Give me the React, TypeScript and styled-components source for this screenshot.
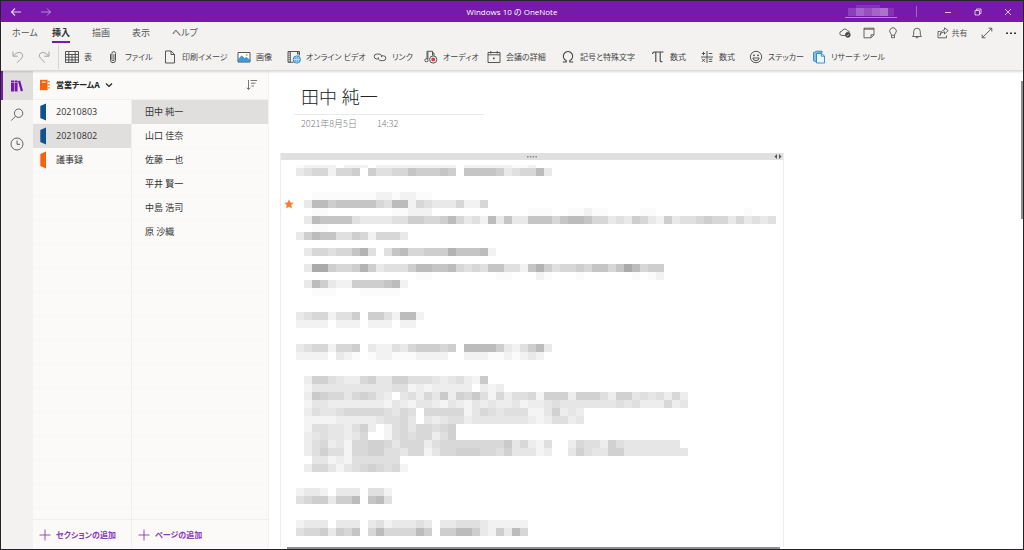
import React from "react";
import styled, { createGlobalStyle } from "styled-components";

const GlobalStyle = createGlobalStyle`
  * { box-sizing: border-box; }
  body { margin: 0; background: #fff; }
  button { font: inherit; color: inherit; background: none; border: 0; padding: 0; margin: 0; cursor: pointer; }
  svg { display: block; flex: none; }
`;

const PURPLE = "#7719aa";

const Window = styled.div`
  display: flex;
  flex-direction: column;
  height: 100vh;
  border: 1px solid #26222a;
  background: #fff;
  color: #333;
  font-family: "Open Sans", "Noto Sans CJK JP", sans-serif;
  font-size: 9px;
  line-height: 12px;
  font-feature-settings: "palt";
  overflow: hidden;
`;

const TitleBar = styled.header`
  display: grid;
  grid-template-columns: 1fr auto 1fr;
  align-items: center;
  height: 21px;
  flex: none;
  background: ${PURPLE};
  color: #e6d3f0;
`;

const BarGroup = styled.div<{ $end?: boolean }>`
  display: flex;
  align-items: center;
  height: 21px;
  justify-content: ${(p) => (p.$end ? "flex-end" : "flex-start")};
`;

const BarButton = styled.button`
  display: grid;
  place-items: center;
  width: 30px;
  height: 21px;
`;

const WindowTitle = styled.div`
  font-size: 8px;
  color: #fff;
  white-space: nowrap;
`;

const Account = styled.button`
  border-bottom: 1px solid #b987d2;
  padding: 0 3px;
  margin-right: 19px;
`;

const Divider = styled.span`
  width: 1px;
  height: 11px;
  background: #a566c8;
  margin-right: 16px;
`;

const Ribbon = styled.div`
  position: relative;
  z-index: 1;
  flex: none;
  background: #f3f2f1;
  border-bottom: 1px solid #dcdbda;
  box-shadow: 0 1px 2px rgba(0, 0, 0, 0.14);
`;

const TabRow = styled.div`
  display: flex;
  justify-content: space-between;
  height: 22px;
`;

const Tabs = styled.nav`
  display: grid;
  grid-auto-flow: column;
  grid-auto-columns: 40px;
  justify-items: start;
  padding-left: 11px;
`;

const Tab = styled.button<{ $active?: boolean }>`
  height: 21px;
  white-space: nowrap;
  color: ${(p) => (p.$active ? "#333" : "#555")};
  font-weight: ${(p) => (p.$active ? 700 : 400)};
  border-top: 2px solid transparent;
  border-bottom: 2px solid ${(p) => (p.$active ? PURPLE : "transparent")};
`;

const Actions = styled.div`
  display: flex;
  align-items: center;
  color: #555;
`;

const ActionButton = styled.button<{ $wide?: boolean }>`
  display: flex;
  align-items: center;
  justify-content: center;
  gap: 3px;
  width: ${(p) => (p.$wide ? 46 : 24)}px;
  height: 22px;
  font-size: 8px;
  white-space: nowrap;
`;

const Toolbar = styled.div`
  display: flex;
  align-items: center;
  height: 26px;
  padding-left: 10px;
  font-size: 8px;
  color: #444;
`;

const Tool = styled.button<{ $width?: number }>`
  display: flex;
  align-items: center;
  gap: 5px;
  width: ${(p) => (p.$width ? `${p.$width}px` : "auto")};
  height: 24px;
  flex: none;
  white-space: nowrap;
`;

const History = styled.div`
  display: flex;
  gap: 12px;
  padding-right: 7px;
  margin-right: 6px;
  border-right: 1px solid #d6d4d2;
  color: #999;
`;

const Body = styled.div`
  display: flex;
  flex: 1;
  min-height: 0;
`;

const Rail = styled.nav`
  width: 32px;
  flex: none;
  background: #f3f2f1;
  color: #555;
`;

const RailButton = styled.button<{ $active?: boolean }>`
  display: grid;
  place-items: center;
  width: 32px;
  height: 29px;
  padding-right: 2px;
  border-left: 2px solid ${(p) => (p.$active ? PURPLE : "transparent")};
  background: ${(p) => (p.$active ? "#e1dfdd" : "transparent")};
`;

const Navigation = styled.aside`
  display: flex;
  flex-direction: column;
  width: 236px;
  flex: none;
  background: #fbfaf9;
  border-right: 1px solid #f3f1f0;
`;

const NotebookBar = styled.div`
  display: flex;
  align-items: center;
  justify-content: space-between;
  height: 29px;
  flex: none;
  padding: 0 10px 0 6px;
  border-bottom: 1px solid #f0efed;
`;

const NotebookButton = styled.button`
  display: flex;
  align-items: center;
  gap: 5px;
  font-size: 8px;
  font-weight: 700;
  color: #222;
`;

const Lists = styled.div`
  display: flex;
  flex: 1;
  min-height: 0;
`;

const Column = styled.div<{ $pages?: boolean }>`
  display: flex;
  flex-direction: column;
  flex: ${(p) => (p.$pages ? "1" : "none")};
  width: ${(p) => (p.$pages ? "auto" : "99px")};
  border-right: ${(p) => (p.$pages ? "0" : "1px solid #f0efed")};
`;

const Items = styled.ul`
  flex: 1;
  margin: 0;
  padding: 0;
  list-style: none;
  background: repeating-linear-gradient(#fbfaf9 0 23px, #f8f7f6 23px 24px);
`;

const Item = styled.button<{ $active?: boolean; $pages?: boolean }>`
  display: flex;
  align-items: center;
  gap: 9px;
  width: 100%;
  height: 24px;
  padding-left: ${(p) => (p.$pages ? 13 : 7)}px;
  background: ${(p) => (p.$active ? "#e1dfdd" : "transparent")};
  white-space: nowrap;
`;

const AddButton = styled.button`
  display: flex;
  align-items: center;
  gap: 5px;
  height: 30px;
  flex: none;
  padding-left: 6px;
  border-top: 1px solid #f0efed;
  font-size: 8px;
  font-weight: 700;
  color: #8a3ab5;
  white-space: nowrap;
`;

const Canvas = styled.main`
  position: relative;
  flex: 1;
  min-width: 0;
  overflow: hidden;
  padding-left: 11px;
`;

const PageHead = styled.div`
  margin: 10px 0 0 14px;
  width: 190px;
`;

const PageTitle = styled.h1`
  margin: 0;
  padding-left: 7px;
  height: 34px;
  border-bottom: 1px solid #e8e8e8;
  font-size: 18px;
  line-height: 32px;
  font-weight: 300;
  color: #222;
`;

const PageDate = styled.div`
  display: flex;
  gap: 20px;
  padding: 2px 0 0 7px;
  color: #808080;
  font-family: "Noto Sans CJK JP", sans-serif;
  font-weight: 300;
  line-height: 14px;
`;

const Note = styled.section`
  max-width: 504px;
  height: 394px;
  margin-top: 22px;
  border: 1px solid #ececec;
  border-width: 0 1px;
`;

const NoteHandle = styled.div`
  display: grid;
  grid-template-columns: 1fr auto 1fr;
  align-items: center;
  height: 7px;
  padding-right: 1px;
  background: #e0e0e0;

  svg:last-child { justify-self: end; }
`;

const NoteBody = styled.div`
  display: flex;
  gap: 2px;
  padding-left: 3px;
`;

const StarTag = styled.span`
  width: 10px;
  padding-top: 39px;
`;

const Scroll = styled.span<{ $horizontal?: boolean }>`
  position: absolute;
  background: #8e8e8e;
  ${(p) =>
    p.$horizontal
      ? "left: 18px; bottom: 0; width: 493px; height: 2px;"
      : "right: 0; top: 10px; width: 2px; height: 138px;"}
`;

const Icon = ({ children, size = 14, w }: { children: React.ReactNode; size?: number; w?: number }) => (
  <svg
    width={w ?? size}
    height={size}
    viewBox={`0 0 ${w ?? size} ${size}`}
    fill="none"
    stroke="currentColor"
    strokeWidth="0.9"
    aria-hidden="true"
  >
    {children}
  </svg>
);

/* Obscured note text: one digit per 8px cell, higher is darker. */
const CELL = 8;
const NOTE_ROWS: Record<number, string> = {
  0: "01111.111.1111111111.111111001",
  1: "23441445.53344655565.66665234472",
  4: "..000000001101100",
  5: ".27756666643771432224114",
  6: "..00........00111............000..00100....00...........0",
  7: ".27666632222335544574231726226664677644232542152334544242323",
  8: "..00",
  9: "25766335414442",
  11: ".244344683.36744555866671",
  13: ".299544585233357766743436633168534454664697455",
  14: "...............00........00...10...0......0.01",
  15: ".2752115555671",
  16: "..000...00000",
  19: "23441335.5531771",
  20: "1111.111.111.11",
  23: "23441445.21132455545.77775213572",
  24: "1111.210.0110001111..1110010121",
  27: ".26643225633664443234217",
  28: ".133333333334412122222.212",
  29: ".27655356532.342537265741524451666266642663434252",
  30: ".133222222213213321321323223122343333333434222523",
  31: ".24334555554354.55555135434441136232",
  32: ".11112222234453.32344233333332124423",
  33: ".144332462.145355456",
  34: ".23433235..145455246",
  35: ".2452315566535552455555555735214..25442643333333",
  36: ".2464415566443551355666554633312..364336633333333",
  37: "..33121444444",
  38: ".2553134565451",
  41: "1221.222.331",
  42: "34552557.673",
  45: "1222.222.23122232.22333211111",
  46: "34452546.47444475.55775215274",
};

/* Rows of the middle paragraph are a paler grey. */
const shade = (row: number, level: number) => {
  const g = 251 - level * (row >= 27 && row <= 38 ? 7 : 9);
  return `rgb(${g},${g},${g})`;
};

const NoteMosaic = () => (
  <svg width="488" height="376" viewBox="0 0 488 376" shapeRendering="crispEdges" role="img" aria-label="Note text">
    {Object.entries(NOTE_ROWS).flatMap(([row, cells]) =>
      [...cells].map((c, i) => {
        if (c === ".") return null;
        const first = row === "0";
        return (
          <rect
            key={`${row}-${i}`}
            x={i * CELL}
            y={Number(row) * CELL + (first ? 5 : 0)}
            width={CELL}
            height={first ? 3 : CELL}
            fill={shade(Number(row), Number(c))}
          />
        );
      })
    )}
  </svg>
);

const AccountMosaic = () => (
  <svg width="46" height="12" viewBox="0 0 46 12" shapeRendering="crispEdges" role="img" aria-label="Account">
    {["#8c3ebb", "#a564ca", "#9850c0", "#a564ca", "#ad72d0", "#8431b3"].map((c, i) => (
      <rect key={i} x={i * 8} y="3" width="8" height="8" fill={c} />
    ))}
    <rect x="8" y="0" width="24" height="3" fill="#8431b3" />
  </svg>
);

const TOOLS: { label: string; width: number; icon: React.ReactNode }[] = [
  {
    label: "表",
    width: 41,
    icon: (
      <Icon>
        <path d="M.5 1.5h13v11H.5zM.5 4.5h13M.5 7.2h13M.5 9.9h13M3.8 1.5v11M7 4.5v8M10.2 1.5v11" />
      </Icon>
    ),
  },
  {
    label: "ファイル",
    width: 57,
    icon: (
      <Icon>
        <path d="M4.5 4v6.2a2.5 2.5 0 0 0 5 0V3.4a1.8 1.8 0 0 0-3.6 0v6.3a1 1 0 0 0 2 0V4.2" />
      </Icon>
    ),
  },
  {
    label: "印刷イメージ",
    width: 74,
    icon: (
      <Icon>
        <path d="M2.5 1h5.6l3.4 3.4V13h-9zM8 1v3.5h3.5" />
      </Icon>
    ),
  },
  {
    label: "画像",
    width: 50,
    icon: (
      <Icon>
        <path fill="#fff" d="M1 2.5h12V12H1z" />
        <path fill="#3f9bd8" stroke="#2b7fb8" strokeWidth=".6" d="M1.4 9.3l3.3-3.5 2.8 2.8 1.7-1.3 3.5 2.6v1.8H1.4z" />
        <circle cx="9.8" cy="5" r=".9" fill="#f0a030" stroke="none" />
      </Icon>
    ),
  },
  {
    label: "オンライン ビデオ",
    width: 86,
    icon: (
      <Icon>
        <path d="M6.5 12.3H1V1.5h11.5v3.8M3.3 1.5v10.8M10.5 1.5v3" />
        <path strokeDasharray="1.2 1" d="M2.1 2.5V12M11.6 2.5v3" />
        <circle cx="9.8" cy="9.5" r="3.6" fill="#4aa3df" stroke="#1f78b8" />
        <path stroke="#d8eefb" strokeWidth=".7" d="M6.4 9.5h6.8M9.8 6v7M8.2 6.7q-1.2 2.8 0 5.6M11.4 6.7q1.2 2.8 0 5.6" />
      </Icon>
    ),
  },
  {
    label: "リンク",
    width: 51,
    icon: (
      <Icon>
        <path d="M5.2 8.9H3.6a2.4 2.4 0 0 1 0-4.8h2.6a2.4 2.4 0 0 1 2.3 3.1" />
        <path d="M8.4 5.8h2a2.4 2.4 0 0 1 0 4.8H7.7a2.4 2.4 0 0 1-2.2-3.2" />
      </Icon>
    ),
  },
  {
    label: "オーディオ",
    width: 63,
    icon: (
      <Icon>
        <path d="M3 9V1.3h5.5v4.2M8.5 3H10v2.8M3.9 2v7" />
        <ellipse cx="2.5" cy="10.3" rx="1.7" ry="1.5" />
        <circle cx="9.2" cy="9.5" r="3.6" fill="#f3f2f1" />
        <circle cx="9.2" cy="9.5" r="1.9" fill="#e03a48" stroke="none" />
      </Icon>
    ),
  },
  {
    label: "会議の詳細",
    width: 74,
    icon: (
      <Icon>
        <path d="M1 2.5h12v10H1zM1 4.8h12M3.8 1v2.5M10.2 1v2.5" />
        <rect x="6" y="7.6" width="1.6" height="1.6" fill="currentColor" stroke="none" />
      </Icon>
    ),
  },
  {
    label: "記号と特殊文字",
    width: 90,
    icon: (
      <Icon>
        <path strokeWidth="1.1" d="M1.8 12h3.4v-1.5A4.7 4.7 0 1 1 8.8 10.5V12h3.4" />
      </Icon>
    ),
  },
  {
    label: "数式",
    width: 49,
    icon: (
      <Icon>
        <path strokeWidth="1.1" d="M1.5 4Q1.7 2 3.5 2h9M4.8 2v10M9.2 2v8.6Q9.2 12 11.5 11.8" />
      </Icon>
    ),
  },
  {
    label: "数式",
    width: 49,
    icon: (
      <Icon>
        <path d="M7 1v12M1 7h12M3.5 1.8v3.4M1.8 3.5h3.4M8.8 3.5h3.4M2 8.7l3 3.2M5 8.7l-3 3.2M8.8 9.2h3.4M8.8 11.4h3.4" />
      </Icon>
    ),
  },
  {
    label: "ステッカー",
    width: 63,
    icon: (
      <Icon>
        <circle cx="7" cy="7" r="5.7" />
        <path d="M3.8 8h6.4q-.6 2.7-3.2 2.7T3.8 8z" />
        <circle cx="5" cy="5.3" r=".9" fill="currentColor" stroke="none" />
        <circle cx="9" cy="5.3" r=".9" fill="currentColor" stroke="none" />
      </Icon>
    ),
  },
  {
    label: "リサーチ ツール",
    width: 80,
    icon: (
      <Icon>
        <path stroke="#2b88c4" fill="#7fbfe8" d="M1.5 2.5L5 1.2h5v1.6l-5.5.7V12l-3-1.200z" />
        <path stroke="#2b88c4" fill="#eaf5fc" d="M4.5 3.5h5l3 2.5v7h-8zM9.3 3.5v2.7h3.2" />
      </Icon>
    ),
  },
];

const SECTIONS = [
  { name: "20210803", color: "#11518f" },
  { name: "20210802", color: "#11518f", active: true },
  { name: "議事録", color: "#f7630c" },
];

const PAGES = ["田中 純一", "山口 佳奈", "佐藤 一也", "平井 賢一", "中島 浩司", "原 沙織"];

const PlusIcon = () => (
  <Icon size={12}>
    <path d="M6 .5v11M.5 6h11" />
  </Icon>
);

export default function App() {
  return (
    <Window lang="ja">
      <GlobalStyle />
      <TitleBar>
        <BarGroup>
          <BarButton aria-label="戻る">
            <Icon size={12}>
              <path strokeWidth="1.1" d="M11 6H1.5M5 2.5L1.5 6 5 9.5" />
            </Icon>
          </BarButton>
          <BarButton aria-label="進む">
            <Icon size={12}>
              <path opacity=".7" d="M1 6h9.5M7 2.5L10.5 6 7 9.5" />
            </Icon>
          </BarButton>
        </BarGroup>
        <WindowTitle>Windows 10 の OneNote</WindowTitle>
        <BarGroup $end>
          <Account aria-label="アカウント">
            <AccountMosaic />
          </Account>
          <Divider />
          <BarButton aria-label="最小化">
            <Icon size={8}>
              <path d="M1 4.5h6" />
            </Icon>
          </BarButton>
          <BarButton aria-label="元に戻す">
            <Icon size={8}>
              <path d="M1 2.5h4.500V7H1zM2.5 2.5V1H7v4.5H5.5" />
            </Icon>
          </BarButton>
          <BarButton aria-label="閉じる">
            <Icon size={8}>
              <path d="M1 1l6 6M7 1L1 7" />
            </Icon>
          </BarButton>
        </BarGroup>
      </TitleBar>

      <Ribbon>
        <TabRow>
          <Tabs>
            {["ホーム", "挿入", "描画", "表示", "ヘルプ"].map((t) => (
              <Tab key={t} $active={t === "挿入"}>
                {t}
              </Tab>
            ))}
          </Tabs>
          <Actions>
            <ActionButton aria-label="同期">
              <Icon size={12}>
                <path d="M6 8.5H3a2.2 2.2 0 0 1 0-4.4 3 3 0 0 1 5.6-.3 2 2 0 0 1 2 1.7" />
                <circle cx="8.8" cy="7.9" r="2.4" fill="#444" stroke="#444" />
                <path stroke="#fff" strokeWidth=".7" d="M7.600 8l.9.9L10 7.2" />
              </Icon>
            </ActionButton>
            <ActionButton aria-label="付箋">
              <Icon size={12}>
                <path d="M1 1.2h10v6.6l-3 3H1zM11 7.8H8v3M1 2.2h10" />
              </Icon>
            </ActionButton>
            <ActionButton aria-label="ヒント">
              <Icon size={12}>
                <path d="M4.5 8.3Q4.4 7 3.4 6.100a3.300 3.300 0 1 1 5.200 0Q7.600 7 7.500 8.300zM4.500 8.300v2.400h3V8.300" />
              </Icon>
            </ActionButton>
            <ActionButton aria-label="通知">
              <Icon size={12}>
                <path d="M1.5 9.5q1.2-1 1.2-2.5V4.5a3.3 3.3 0 0 1 6.6 0V7q0 1.5 1.2 2.5zM4.8 9.7a1.2 1.2 0 0 0 2.4 0" />
              </Icon>
            </ActionButton>
            <ActionButton $wide>
              <Icon size={12}>
                <path d="M3.5 4.5H1v6.3h8.5V8.5M3 8.5Q3.5 5 7.5 4.8V7l3.700-3.400L7.500.8v2Q3.500 3.500 3 8.500z" />
              </Icon>
              共有
            </ActionButton>
            <ActionButton aria-label="全画面">
              <Icon size={12}>
                <path d="M1.2 10.8l9.600-9.600M7.500 1.200h3.300v3.300M4.500 10.800H1.200V7.500" />
              </Icon>
            </ActionButton>
            <ActionButton aria-label="その他">
              <Icon size={12}>
                <path stroke="none" fill="#333" d="M1 5.5h2V7H1zM5 5.5h2V7H5zM9 5.5h2V7H9z" />
              </Icon>
            </ActionButton>
          </Actions>
        </TabRow>
        <Toolbar>
          <History>
            <Tool aria-label="元に戻す">
              <Icon>
                <path d="M2 1.5v4.7h4.7M2.3 6Q5 2.4 8.3 2.4a3.3 3.3 0 0 1 2.4 5.6L6 12.7" />
              </Icon>
            </Tool>
            <Tool aria-label="やり直し">
              <Icon>
                <path d="M12 1.5v4.7H7.3M11.7 6Q9 2.4 5.7 2.4A3.3 3.3 0 0 0 3.3 8L8 12.7" />
              </Icon>
            </Tool>
          </History>
          {TOOLS.map((t, i) => (
            <Tool key={i} $width={t.width}>
              {t.icon}
              {t.label}
            </Tool>
          ))}
        </Toolbar>
      </Ribbon>

      <Body>
        <Rail>
          <RailButton $active aria-label="ノートブック">
            <Icon size={12}>
              <path
                stroke="none"
                fill={PURPLE}
                d="M0 .5h3v11H0zM3.600.5h3v11h-3zM7 1.200l2.200-.7L12 10.800l-2.200.7z"
              />
              <path stroke="#e1dfdd" strokeWidth=".5" d="M0 2.5h3M3.6 2.5h3" />
            </Icon>
          </RailButton>
          <RailButton aria-label="検索">
            <Icon>
              <circle cx="8.6" cy="5.2" r="4.2" />
              <path d="M5.6 8.2l-4.4 4.4" />
            </Icon>
          </RailButton>
          <RailButton aria-label="最近使ったノート">
            <Icon>
              <circle cx="7" cy="7" r="6" />
              <path d="M7 3.5v3.8h3" />
            </Icon>
          </RailButton>
        </Rail>

        <Navigation>
          <NotebookBar>
            <NotebookButton>
              <Icon size={12}>
                <path stroke="none" fill="#f7630c" d="M1 .8h7.600v10.400H1z" />
                <path stroke="#fff" d="M2.8 3.2h4" />
                <path stroke="#f7630c" strokeWidth="1.3" d="M9.2 2.7h1.5M9.2 5.8h1.5M9.2 8.9h1.5" />
              </Icon>
              営業チームA
              <Icon size={8}>
                <path strokeWidth="1.2" d="M1 2.5l3 3 3-3" />
              </Icon>
            </NotebookButton>
            <button aria-label="並べ替え">
              <Icon size={12}>
                <path stroke="#666" d="M2.5 1v9.5M.7 8.7l1.8 1.8 1.8-1.8M4.5 1.5H11M5 4.2h4.5M5.5 7H8" />
              </Icon>
            </button>
          </NotebookBar>
          <Lists>
            <Column>
              <Items>
                {SECTIONS.map((s) => (
                  <li key={s.name}>
                    <Item $active={s.active}>
                      <Icon size={18} w={7}>
                        <path stroke="none" fill={s.color} d="M6 .5v17L.3 15V3z" />
                      </Icon>
                      {s.name}
                    </Item>
                  </li>
                ))}
              </Items>
              <AddButton>
                <PlusIcon />
                セクションの追加
              </AddButton>
            </Column>
            <Column $pages>
              <Items>
                {PAGES.map((p, i) => (
                  <li key={p}>
                    <Item $pages $active={i === 0}>
                      {p}
                    </Item>
                  </li>
                ))}
              </Items>
              <AddButton>
                <PlusIcon />
                ページの追加
              </AddButton>
            </Column>
          </Lists>
        </Navigation>

        <Canvas>
          <PageHead>
            <PageTitle>田中 純一</PageTitle>
            <PageDate>
              <span>2021年8月5日</span>
              <span>14:32</span>
            </PageDate>
          </PageHead>
          <Note>
            <NoteHandle>
              <span />
              <svg width="10" height="3" viewBox="0 0 10 3" fill="#888" aria-hidden="true">
                <path d="M0 1h1.500v1.500H0zM2.800 1h1.500v1.500H2.800zM5.600 1h1.500v1.500H5.600zM8.400 1h1.500v1.500H8.400z" />
              </svg>
              <svg width="8" height="5" viewBox="0 0 8 5" fill="#555" aria-hidden="true">
                <path d="M3 0v5L.5 2.500zM5 0v5l2.500-2.500z" />
              </svg>
            </NoteHandle>
            <NoteBody>
              <StarTag>
                <svg width="10" height="10" viewBox="0 0 10 10" fill="#f08030" aria-hidden="true">
                  <path d="M5 .3l1.400 3.200 3.300.3-2.500 2.300.8 3.400L5 7.700 2 9.500l.8-3.400L.3 3.800l3.300-.3z" />
                </svg>
              </StarTag>
              <NoteMosaic />
            </NoteBody>
          </Note>
          <Scroll />
          <Scroll $horizontal />
        </Canvas>
      </Body>
    </Window>
  );
}
